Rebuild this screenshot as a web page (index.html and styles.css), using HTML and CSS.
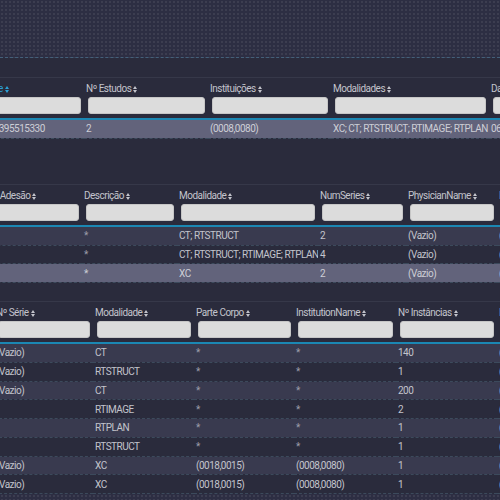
FILE: index.html
```html
<!DOCTYPE html>
<html lang="pt">
<head>
    <meta charset="UTF-8">
    <title>Pesquisa DICOM</title>
    <link rel="stylesheet" href="styles.css">
</head>
<body>
    <div class="top-panel"></div>

    <section class="grid-box grid-patients">
        <table class="grid">
            <colgroup>
                <col style="width:118px"><col style="width:124px"><col style="width:123px"><col style="width:158px"><col style="width:100px">
            </colgroup>
            <thead>
                <tr>
                    <th class="sorted"><span class="lbl">Paciente<i class="sort"></i></span><input type="text"></th>
                    <th><span class="lbl">Nº Estudos<i class="sort"></i></span><input type="text"></th>
                    <th><span class="lbl">Instituições<i class="sort"></i></span><input type="text"></th>
                    <th><span class="lbl">Modalidades<i class="sort"></i></span><input type="text"></th>
                    <th><span class="lbl">Data<i class="sort"></i></span><input type="text"></th>
                </tr>
            </thead>
            <tbody>
                <tr class="selected">
                    <td>201903395515330</td>
                    <td>2</td>
                    <td>(0008,0080)</td>
                    <td>XC; CT; RTSTRUCT; RTIMAGE; RTPLAN</td>
                    <td>06/03/2019</td>
                </tr>
            </tbody>
        </table>
    </section>

    <section class="grid-box grid-studies">
        <table class="grid">
            <colgroup>
                <col style="width:105px"><col style="width:95px"><col style="width:141px"><col style="width:88px"><col style="width:91px"><col style="width:100px">
            </colgroup>
            <thead>
                <tr>
                    <th><span class="lbl">Data Adesão<i class="sort"></i></span><input type="text"></th>
                    <th><span class="lbl">Descrição<i class="sort"></i></span><input type="text"></th>
                    <th><span class="lbl">Modalidade<i class="sort"></i></span><input type="text"></th>
                    <th><span class="lbl">NumSeries<i class="sort"></i></span><input type="text"></th>
                    <th><span class="lbl">PhysicianName<i class="sort"></i></span><input type="text"></th>
                    <th><span class="lbl">Data<i class="sort"></i></span><input type="text"></th>
                </tr>
            </thead>
            <tbody>
                <tr class="odd">
                    <td></td><td class="dim">*</td><td>CT; RTSTRUCT</td><td>2</td><td>(Vazio)</td><td>(Vazio)</td>
                </tr>
                <tr>
                    <td></td><td class="dim">*</td><td>CT; RTSTRUCT; RTIMAGE; RTPLAN</td><td>4</td><td>(Vazio)</td><td>(Vazio)</td>
                </tr>
                <tr class="selected">
                    <td></td><td class="dim">*</td><td>XC</td><td>2</td><td>(Vazio)</td><td>(Vazio)</td>
                </tr>
            </tbody>
        </table>
    </section>

    <section class="grid-box grid-series">
        <table class="grid">
            <colgroup>
                <col style="width:99px"><col style="width:101px"><col style="width:100px"><col style="width:102px"><col style="width:101px"><col style="width:100px">
            </colgroup>
            <thead>
                <tr>
                    <th><span class="lbl">Nº Série<i class="sort"></i></span><input type="text"></th>
                    <th><span class="lbl">Modalidade<i class="sort"></i></span><input type="text"></th>
                    <th><span class="lbl">Parte Corpo<i class="sort"></i></span><input type="text"></th>
                    <th><span class="lbl">InstitutionName<i class="sort"></i></span><input type="text"></th>
                    <th><span class="lbl">Nº Instâncias<i class="sort"></i></span><input type="text"></th>
                    <th><span class="lbl">Data<i class="sort"></i></span><input type="text"></th>
                </tr>
            </thead>
            <tbody>
                <tr class="odd"><td>(Vazio)</td><td>CT</td><td class="dim">*</td><td class="dim">*</td><td>140</td><td>(Vazio)</td></tr>
                <tr><td>(Vazio)</td><td>RTSTRUCT</td><td class="dim">*</td><td class="dim">*</td><td>1</td><td>(Vazio)</td></tr>
                <tr class="odd"><td>(Vazio)</td><td>CT</td><td class="dim">*</td><td class="dim">*</td><td>200</td><td>(Vazio)</td></tr>
                <tr><td></td><td>RTIMAGE</td><td class="dim">*</td><td class="dim">*</td><td>2</td><td>(Vazio)</td></tr>
                <tr class="odd"><td></td><td>RTPLAN</td><td class="dim">*</td><td class="dim">*</td><td>1</td><td>(Vazio)</td></tr>
                <tr><td></td><td>RTSTRUCT</td><td class="dim">*</td><td class="dim">*</td><td>1</td><td>(Vazio)</td></tr>
                <tr class="odd"><td>(Vazio)</td><td>XC</td><td>(0018,0015)</td><td>(0008,0080)</td><td>1</td><td>(Vazio)</td></tr>
                <tr><td>(Vazio)</td><td>XC</td><td>(0018,0015)</td><td>(0008,0080)</td><td>1</td><td>(Vazio)</td></tr>
            </tbody>
        </table>
    </section>

    <div class="bottom-panel"></div>
</body>
</html>
```

FILE: styles.css
```css
body {
    margin: 0;
    width: 500px;
    height: 500px;
    overflow: hidden;
    background-color: #2a2b3c;
    color: #c3c4cc;
    font-family: Roboto, "Liberation Sans", sans-serif;
    font-size: 10px;
    letter-spacing: -0.5px;
}

.top-panel {
    height: 57px;
    background-color: #2d2e43;
    background-image: radial-gradient(rgba(255, 255, 255, 0.07) 0.8px, transparent 0.8px);
    background-size: 4px 4px;
    border-bottom: 1px dashed #44607a;
}

.bottom-panel {
    height: 20px;
    background-color: #2d2e43;
    background-image: radial-gradient(rgba(255, 255, 255, 0.07) 0.8px, transparent 0.8px);
    background-size: 4px 4px;
}

.grid-box {
    overflow: hidden;
    border-top: 1px solid #363849;
}

.grid-patients {
    margin-top: 19px;
}

.grid-patients .grid {
    width: 623px;
    margin-left: -34px;
}

.grid-studies {
    margin-top: 45px;
}

.grid-studies .grid {
    width: 620px;
    margin-left: -23px;
}

.grid-series {
    margin-top: 18px;
}

.grid-series .grid {
    width: 603px;
    margin-left: -6px;
}

.grid {
    table-layout: fixed;
    border-collapse: collapse;
}

.grid th {
    padding: 4px 3px 4px 2px;
    text-align: left;
    font-weight: normal;
    white-space: nowrap;
    overflow: hidden;
    border-bottom: 2px solid #1b87b3;
}

.grid th.sorted {
    color: #2a9fd6;
}

.lbl {
    display: block;
    height: 13px;
    line-height: 13px;
}

.sort {
    display: inline-block;
    position: relative;
    width: 5px;
    height: 7px;
    margin-left: 2px;
    vertical-align: -1px;
}

.sort::before,
.sort::after {
    content: "";
    position: absolute;
    left: 0;
    border-left: 2.5px solid transparent;
    border-right: 2.5px solid transparent;
}

.sort::before {
    top: 0;
    border-bottom: 3px solid currentColor;
}

.sort::after {
    bottom: 0;
    border-top: 3px solid currentColor;
}

.grid input {
    display: block;
    box-sizing: border-box;
    width: calc(100% - 2px);
    height: 17px;
    margin: 2px 0 0 2px;
    padding: 0 4px;
    background-color: #dcdcdc;
    border: 1px solid #c6c6c6;
    border-radius: 3px;
}

.grid td {
    height: 17.75px;
    padding: 0 2px;
    white-space: nowrap;
    overflow: hidden;
    border-bottom: 1px dashed #3c4a5c;
}

.grid tr.odd td {
    background-color: #393a4f;
}

.grid tr.selected td {
    background-color: #62637b;
    color: #cdced6;
}

.grid td.dim {
    color: #9c9daa;
}
```
